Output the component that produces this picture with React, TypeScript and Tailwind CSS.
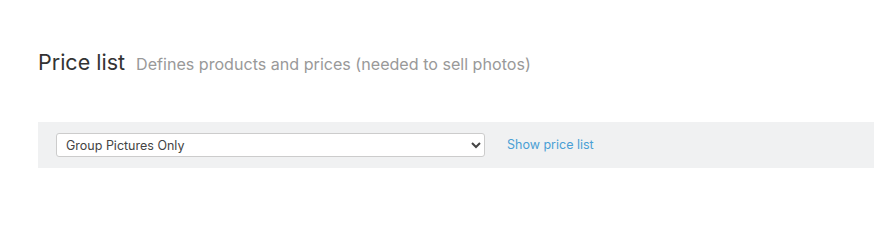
import React from "react";

export default function App() {
  return (
    <div className="min-h-[226px] w-[874px] bg-white pl-[38px] pt-[47px]" style={{ fontFamily: "Inter, 'Noto Sans', sans-serif" }}>
      <div className="flex items-baseline gap-[11px]">
        <h1 className="text-[21.5px] leading-[31px] font-normal text-[#333333]">Price list</h1>
        <span className="text-[16.1px] text-[#999999]">Defines products and prices (needed to sell photos)</span>
      </div>
      <div className="mt-[44px] flex h-[46px] items-center gap-[22px] bg-[#f0f1f2] pl-[18px]">
        <select
          defaultValue="group"
          className="h-[24px] w-[429px] rounded-[3px] border border-[#cccccc] bg-white pl-[5px] text-[12.5px] text-[#444444]"
        >
          <option value="group">Group Pictures Only</option>
        </select>
        <a href="#" className="text-[12.5px] text-[#4a9fd5]">Show price list</a>
      </div>
    </div>
  );
}
